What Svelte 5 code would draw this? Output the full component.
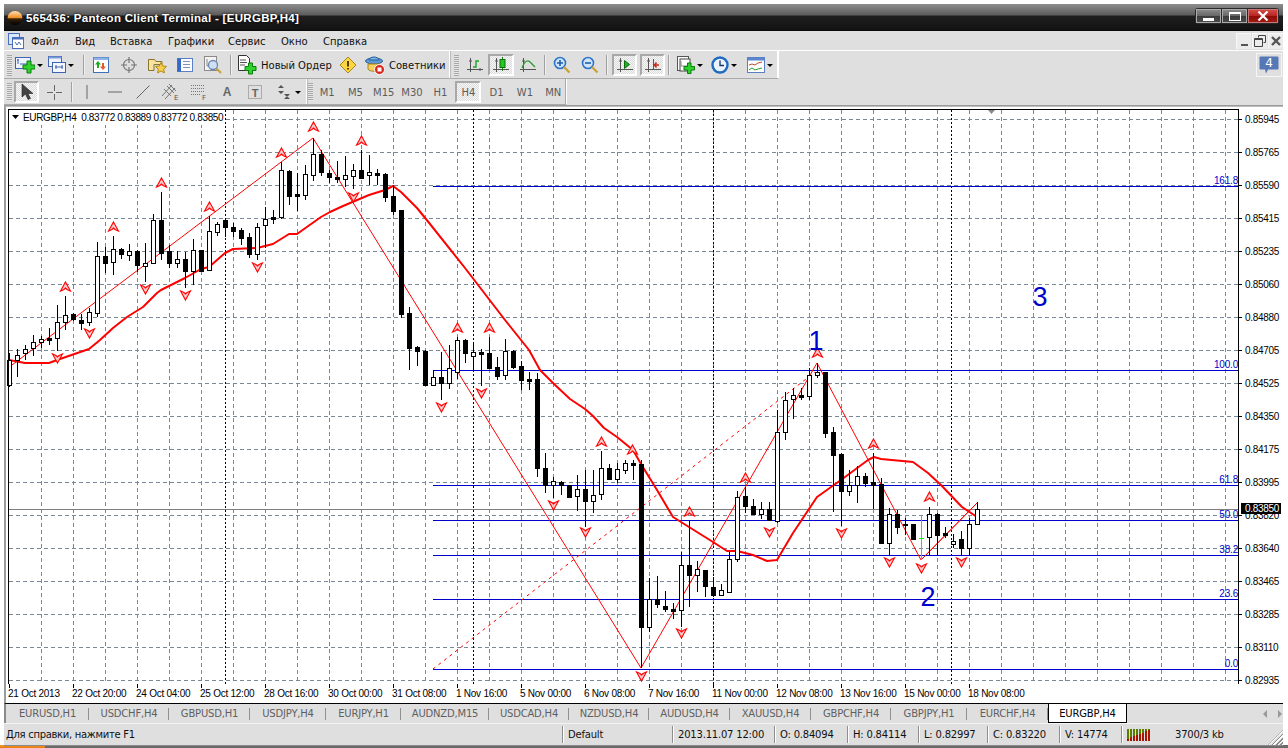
<script>
  const candles = [
    [353,360,385,387,1],[349,355,360,377,1],[345,349,353,360,1],[335,342,348,356,1],[336,339,342,348,1],[328,338,340,345,0],[305,322,338,351,1],[296,315,322,330,1],
    [313,314,319,321,0],[314,320,323,330,0],[308,312,322,326,1],[242,256,313,317,1],[247,256,263,273,0],[236,249,262,275,1],[248,249,254,259,0],[244,251,255,261,1],
    [250,251,265,272,0],[243,263,266,282,1],[214,220,263,263,1],[192,220,253,260,0],[245,251,263,268,0],[251,259,263,268,1],[252,259,271,288,0],[239,250,271,285,1],
    [250,250,271,272,0],[216,231,270,271,1],[222,224,232,236,1],[219,220,227,237,0],[223,227,231,237,0],[228,230,238,245,0],[233,237,254,258,0],[223,227,254,260,1],
    [207,219,225,248,1],[210,217,219,224,0],[162,170,217,219,1],[170,171,196,205,0],[173,194,196,211,0],[165,174,195,200,1],[138,154,175,181,1],[150,154,172,176,0],
    [170,173,177,183,0],[161,177,179,183,0],[156,175,179,187,1],[164,170,176,189,1],[150,170,178,178,0],[155,172,175,185,1],[169,173,175,185,0],[173,174,197,202,0],
    [185,196,211,215,0],[210,210,314,318,0],[307,313,348,370,0],[346,347,351,366,0],[350,351,385,386,0],[370,377,385,386,1],[352,377,383,400,0],[345,368,383,389,1],
    [337,340,372,379,1],[339,340,353,363,0],[342,352,356,372,1],[349,352,354,386,0],[337,353,368,368,0],[357,367,376,380,0],[339,351,375,380,1],[350,351,367,369,0],
    [361,366,380,390,0],[372,379,381,390,0],[373,379,468,477,0],[453,468,485,493,0],[477,481,485,498,1],[481,482,485,495,0],[485,485,497,497,0],[475,489,496,511,1],
    [470,489,501,527,0],[470,495,501,513,1],[451,468,494,500,1],[464,468,479,479,0],[463,469,479,483,1],[460,463,470,474,1],[460,463,465,480,0],[460,464,627,668,0],
    [578,599,627,632,1],[576,599,604,608,0],[591,606,609,612,0],[603,609,611,619,0],[552,565,610,627,1],[521,565,575,607,0],[561,569,575,592,1],[570,570,586,597,0],
    [577,587,595,597,0],[584,590,595,596,1],[552,559,592,592,1],[491,497,559,562,1],[487,496,506,513,0],[499,506,514,514,0],[502,509,514,519,1],[502,509,520,521,0],
    [410,432,521,523,1],[392,400,432,440,1],[388,395,399,419,1],[388,395,397,400,0],[368,375,396,400,1],[363,372,375,378,1],[372,372,433,438,0],[427,432,455,512,0],
    [453,454,491,526,0],[470,485,491,496,1],[466,476,485,503,1],[473,476,483,487,0],[453,482,485,509,0],[478,484,543,543,0],[508,514,543,555,1],[510,514,527,534,0],
    [518,524,525,535,0],[524,524,539,539,0],[515,538,538,560,2],[507,514,537,555,1],[513,514,535,555,0],[527,533,535,538,0],[534,541,544,548,1],[531,539,548,555,0],
    [518,524,548,555,1],[502,509,524,525,1]
  ];
  const barX = (i) => 9 + 8 * i;
  const prices = ['0.85945','0.85765','0.85590','0.85415','0.85235','0.85060','0.84880','0.84705','0.84525','0.84350','0.84175','0.83995','0.83820','0.83640','0.83465','0.83285','0.83110','0.82935'];
  const times = ['21 Oct 2013','22 Oct 20:00','24 Oct 04:00','25 Oct 12:00','28 Oct 16:00','30 Oct 00:00','31 Oct 08:00','1 Nov 16:00','5 Nov 00:00','6 Nov 08:00','7 Nov 16:00','11 Nov 00:00','12 Nov 08:00','13 Nov 16:00','15 Nov 00:00','18 Nov 08:00'];
  const vgrid = Array.from({ length: 38 }, (_, k) => 41 + 32 * k);
  const fibs = [['161.8',186],['100.0',370],['61.8',485],['50.0',520],['38.2',555],['23.6',599],['0.0',669]];
  const ma = '9,360 25,363 49,363 57,360 89,349 100,340 113,328 127,317 143,307 157,293 161,290 185,278 201,269 209,267 225,253 233,249 257,248 273,244 289,234 297,234 321,217 330,212 343,206 369,195 385,190 393,186 401,192 417,208 430,224 465,268 505,320 529,350 540,370 553,383 570,399 585,409 593,416 604,428 617,437 633,450 641,464 657,490 673,517 689,527 713,542 727,551 737,551 753,555 767,561 777,560 793,533 817,497 841,480 868,460 874,457 881,459 913,462 928,473 941,485 962,507 977,517';
  const ups = [[65,287],[113,227],[161,183],[209,207],[281,153],[313,127],[361,141],[457,328],[489,328],[601,442],[632,450],[689,512],[745,478],[817,353],[873,444],[929,497]];
  const downs = [[57,358],[89,333],[145,289],[185,295],[257,267],[353,197],[441,407],[481,393],[553,505],[585,532],[641,676],[681,633],[769,532],[841,533],[889,562],[921,568],[961,562]];
  const arrow = 'M0 -5L5 4L1.5 2.5L0 1L-1.500 2.5L-5 4Z';
  const tabs = [['EURUSD,H1',83],['USDCHF,H4',80],['GBPUSD,H1',81],['USDJPY,H4',76],['EURJPY,H1',75],['AUDNZD,M15',88],['USDCAD,H4',80],['NZDUSD,H4',80],['AUDUSD,H4',81],['XAUUSD,H4',81],['GBPCHF,H4',80],['GBPJPY,H1',76],['EURCHF,H4',81]];
  const meters = [0,1,2,3,4,5,6,7];
</script>

<div class="window">
  <header class="title">
    <svg class="orb" viewBox="0 0 16 16" width="16" height="16"><defs><linearGradient id="orbg" x1="0" y1="0" x2="0" y2="1"><stop offset="0" stop-color="#ffe0b0"/><stop offset=".5" stop-color="#f08a20"/><stop offset=".55" stop-color="#3a2208"/><stop offset="1" stop-color="#000"/></linearGradient></defs><ellipse cx="8" cy="8" rx="7.5" ry="7" fill="url(#orbg)"/></svg>
    <span class="title-text">565436: Panteon Client Terminal - [EURGBP,H4]</span>
    <div class="winbtns">
      <div class="wb"><i class="bar-min"></i></div>
      <div class="wb"><i class="box-max"></i></div>
      <div class="wb close"><svg viewBox="0 0 12 10" width="12" height="10"><path d="M1.5 .5L10.5 9.5M10.5 .5L1.5 9.5" stroke="#fff" stroke-width="2.2"/></svg></div>
    </div>
  </header>

  <nav class="menu">
    <svg class="menu-icon" viewBox="0 0 16 16" width="16" height="16"><rect x=".5" y=".5" width="11" height="11" fill="#dbe6fa" stroke="#4a6fbe"/><rect x="4.5" y="4.5" width="11" height="11" fill="#fff" stroke="#4a6fbe"/><rect x="4.5" y="4.5" width="11" height="2" fill="#4a6fbe"/><path d="M7 9l2 3 2-3 2 3" stroke="#4a6fbe" fill="none"/></svg>
    <span class="mi m1">Файл</span><span class="mi m2">Вид</span><span class="mi m3">Вставка</span><span class="mi m4">Графики</span><span class="mi m5">Сервис</span><span class="mi m6">Окно</span><span class="mi m7">Справка</span>
    <div class="mdi">
      <div class="mb"><i class="mdi-min"></i></div>
      <div class="mb"><svg viewBox="0 0 14 14" width="14" height="14"><path d="M5.5 1.5h7v7h-2M1.5 4.5h8v8h-8zM1.5 5.5h8M5.5 1.5v2" fill="none" stroke="#444"/></svg></div>
      <div class="mb"><svg viewBox="0 0 12 12" width="12" height="12"><path d="M2 2L10 10M10 2L2 10" stroke="#555" stroke-width="2.4"/></svg></div>
    </div>
  </nav>

  <div class="toolrow r1">
    <div class="tools t1">
      <i class="grip"></i>
      <div class="btn w30"><svg viewBox="0 0 20 18" width="20" height="18"><rect x=".5" y="1.5" width="15" height="11" fill="#eef3fd" stroke="#3e63b0"/><path d="M3 3v5M2 4h2M5 8h8" stroke="#3e63b0" fill="none"/><path d="M8 9h4V5h4v4h4v4h-4v4h-4v-4H8z" fill="#2fd12f" stroke="#0a7d0a"/></svg><b class="caret"></b></div>
      <div class="btn w33"><svg viewBox="0 0 18 18" width="18" height="18"><rect x=".5" y=".5" width="13" height="10" fill="#eef3fd" stroke="#3e63b0"/><rect x=".5" y=".5" width="13" height="2" fill="#7e9cdc"/><rect x="4.5" y="6.5" width="13" height="10" fill="#f4f7fe" stroke="#3e63b0"/><path d="M7 11h8M8 9v4M14 9v4" stroke="#3e63b0"/></svg><b class="caret"></b></div>
      <i class="sep sa"></i>
      <div class="btn w28"><svg viewBox="0 0 16 16" width="16" height="16"><rect x=".5" y=".5" width="15" height="15" fill="#fff" stroke="#3e70b8"/><rect x=".5" y=".5" width="15" height="2.5" fill="#8fb3e8"/><path d="M5 4L2 7.5h2V11h2V7.5h2z" fill="#22a822"/><path d="M10 13l3-3.5h-2V6H9v3.5H7z" fill="#e2582a"/></svg></div>
      <div class="btn w28"><svg viewBox="0 0 18 18" width="18" height="18"><circle cx="9" cy="9" r="5.5" fill="none" stroke="#777" stroke-width="1.2"/><path d="M9 1v6M9 11v6M1 9h6M11 9h6" stroke="#777" stroke-width="1.2"/></svg></div>
      <div class="btn w28"><svg viewBox="0 0 19 18" width="19" height="18"><path d="M.5 3.5h6l1.500 2h6v3h-8v6h-5.500z" fill="#f8e39a" stroke="#8a7430"/><path d="M13 6.500l1.700 3.500 3.800.5-2.800 2.600.7 3.800-3.400-1.900-3.400 1.900.7-3.800-2.800-2.600 3.800-.5z" fill="#f7cf4b" stroke="#b08a14"/></svg></div>
      <div class="btn w28"><svg viewBox="0 0 16 16" width="16" height="16"><rect x=".5" y="1.500" width="15" height="13" fill="#fff" stroke="#5a7fc4"/><rect x=".5" y="1.500" width="3.500" height="13" fill="#3469c9"/><path d="M6 4.500h7M6 7.500h7M6 10.500h7" stroke="#7d93bb"/></svg></div>
      <div class="btn w28"><svg viewBox="0 0 18 18" width="18" height="18"><rect x=".5" y=".5" width="12" height="14" fill="#f4f4f4" stroke="#8a8a8a"/><path d="M3 3v7h7" stroke="#888" fill="none"/><circle cx="9" cy="9" r="4.500" fill="#cfe0f6" stroke="#6a86ad" stroke-width="1.300"/><path d="M12.500 12.500l4.500 4.500" stroke="#c9a33c" stroke-width="2.200"/></svg></div>
      <i class="sep sb"></i>
      <div class="btn wo"><svg viewBox="0 0 20 20" width="20" height="20"><path d="M1.500 .5h8l3 3v12h-11z" fill="#fff" stroke="#333"/><path d="M3 5h6M3 7.500h7M3 10h5" stroke="#555"/><path d="M8 11.500h3.500V8h4v3.500H19v4h-3.500V19h-4v-3.500H8z" fill="#2fd12f" stroke="#0a7d0a"/></svg><span class="btxt">Новый Ордер</span></div>
      <div class="btn w26"><svg viewBox="0 0 18 18" width="18" height="18"><path d="M9 1l8 8-8 8-8-8z" fill="#fbd640" stroke="#a8881c"/><path d="M9 5v5.500M9 12v1.500" stroke="#5a3d08" stroke-width="2"/></svg></div>
      <div class="btn wa"><svg viewBox="0 0 20 20" width="20" height="20"><ellipse cx="9" cy="6" rx="8.500" ry="3" fill="#5b9ad8" stroke="#2a5e98"/><path d="M4 5c1-4 9-4 10 0z" fill="#7ab4e4" stroke="#2a5e98"/><path d="M3 9h12v5c-1 3-11 3-12 0z" fill="#f7cf5c" stroke="#a8881c"/><circle cx="14.500" cy="14.500" r="5" fill="#d4281c" stroke="#fff"/><rect x="12.500" y="12.500" width="4" height="4" fill="#fff"/></svg><span class="btxt">Советники</span></div>
    </div>
    <div class="tools t2">
      <i class="grip"></i>
      <div class="btn w27"><svg viewBox="0 0 18 18" width="18" height="18"><path d="M4.500 2v14M1 13.500h16M3 5h3M14 15v-3" stroke="#555" fill="none"/><path d="M7 11h3V5h3" stroke="#1fa41f" stroke-width="1.400" fill="none"/></svg></div>
      <div class="btn w26 on"><svg viewBox="0 0 18 18" width="18" height="18"><path d="M4.500 2v14M1 13.500h16M3 5h3" stroke="#555" fill="none"/><path d="M10.500 1v14" stroke="#1a7a1a"/><rect x="8" y="3.500" width="5" height="8" fill="#23c823" stroke="#0d6e0d"/></svg></div>
      <div class="btn w28"><svg viewBox="0 0 18 18" width="18" height="18"><path d="M4.500 2v14M1 13.500h16M3 5h3" stroke="#555" fill="none"/><path d="M3 12c3-8 6-8 8-6s3 3 5 5" stroke="#2b9b2b" stroke-width="1.300" fill="none"/></svg></div>
      <i class="sep"></i>
      <div class="btn w28"><svg viewBox="0 0 18 18" width="18" height="18"><circle cx="7" cy="7" r="5.500" fill="#cfe4fb" stroke="#2c74c8" stroke-width="1.600"/><path d="M4 7h6M7 4v6" stroke="#1f5fae" stroke-width="1.600"/><path d="M11 11l5.500 5.500" stroke="#c9a33c" stroke-width="2.400"/></svg></div>
      <div class="btn w28"><svg viewBox="0 0 18 18" width="18" height="18"><circle cx="7" cy="7" r="5.500" fill="#cfe4fb" stroke="#2c74c8" stroke-width="1.600"/><path d="M4 7h6" stroke="#1f5fae" stroke-width="1.600"/><path d="M11 11l5.500 5.500" stroke="#c9a33c" stroke-width="2.400"/></svg></div>
      <i class="sep sc"></i>
      <div class="btn w25 on"><svg viewBox="0 0 18 18" width="18" height="18"><path d="M4.500 2v14M1 13.500h16M3 5h3" stroke="#555" fill="none"/><path d="M8.500 4.500l5 4-5 4z" fill="#1fb01f" stroke="#0d6e0d"/></svg></div>
      <div class="btn w25 on gap3"><svg viewBox="0 0 18 18" width="18" height="18"><path d="M4.500 2v14M1 13.500h16M3 5h3M9.500 3v11" stroke="#555" fill="none"/><path d="M15 9H11M12.500 6.500L10.500 9l2 2.500" stroke="#c82a1a" stroke-width="1.600" fill="none"/></svg></div>
      <i class="sep sd"></i>
      <div class="btn w35"><svg viewBox="0 0 18 18" width="18" height="18"><rect x=".5" y=".5" width="11" height="14" fill="#fff" stroke="#555"/><rect x="3" y="3" width="10" height="12" fill="#fff" stroke="#444"/><path d="M4 5v5h6" stroke="#888" fill="none"/><path d="M7 10.500h3.500V7h3.500v3.500H17.500v3.500H14V17.500h-3.500V14H7z" fill="#2fd12f" stroke="#0a7d0a"/></svg><b class="caret"></b></div>
      <div class="btn w34"><svg viewBox="0 0 18 18" width="18" height="18"><circle cx="9" cy="9" r="7.500" fill="#eaf4ff" stroke="#1f6ac0" stroke-width="2.400"/><path d="M9 4.500V9.500h4" stroke="#16345a" stroke-width="1.300" fill="none"/></svg><b class="caret"></b></div>
      <div class="btn w35 gap1"><svg viewBox="0 0 18 16" width="18" height="16"><rect x=".5" y=".5" width="17" height="15" fill="#fff" stroke="#5a7fc4"/><rect x=".5" y=".5" width="17" height="3" fill="#5a86d0"/><path d="M2 8l3-1 3 1 3-2 4-1" stroke="#c84a2a" fill="none"/><path d="M2 13l3-2 3 2 3-1 4-1" stroke="#2b9b2b" fill="none"/></svg><b class="caret"></b></div>
    </div>
    <div class="notify"><svg viewBox="0 0 20 18" width="20" height="18"><path d="M1.500 .5h17a1 1 0 0 1 1 1v11a1 1 0 0 1-1 1H9l-2 4-1-4H1.500a1 1 0 0 1-1-1v-11a1 1 0 0 1 1-1z" fill="#5678b6"/><text x="10" y="11" class="notify-n">4</text></svg></div>
  </div>

  <div class="toolrow r2">
    <div class="tools t3">
      <i class="grip g2"></i>
      <div class="btn w25 on"><svg viewBox="0 0 14 18" width="14" height="18"><path d="M2 1v13l3.500-3 2.500 5.500 2.500-1L8 10.500h5z" fill="#444" stroke="#222" stroke-width=".6"/></svg></div>
      <div class="btn w30"><svg viewBox="0 0 17 17" width="17" height="17"><path d="M8.500 1v6M8.500 10v6M1 8.500h6M10 8.500h6" stroke="#666"/></svg></div>
      <i class="sep s2"></i>
      <div class="btn w28"><svg viewBox="0 0 6 14" width="6" height="14"><path d="M3 0v14" stroke="#666"/></svg></div>
      <div class="btn w28"><svg viewBox="0 0 14 6" width="14" height="6"><path d="M0 3h14" stroke="#666"/></svg></div>
      <div class="btn w28"><svg viewBox="0 0 14 14" width="14" height="14"><path d="M.5 13.500l13-13" stroke="#666"/></svg></div>
      <div class="btn w28"><svg viewBox="0 0 20 18" width="20" height="18"><path d="M1 13L11 2M4 16L14 5M6 3l7 7M3 6l7 7M8 1l7 7" stroke="#777" fill="none"/><text x="13" y="17" class="lil">E</text></svg></div>
      <div class="btn w28"><svg viewBox="0 0 18 18" width="18" height="18"><path d="M1 2.500h14M1 5.500h14M1 8.500h14M1 11.500h10" stroke="#777" stroke-dasharray="1 1"/><text x="12" y="17" class="lil">F</text></svg></div>
      <div class="btn w28"><span class="bigA">A</span></div>
      <div class="btn w28"><svg viewBox="0 0 16 16" width="16" height="16"><rect x="1.500" y="1.500" width="13" height="13" fill="none" stroke="#777" stroke-dasharray="1 1"/><text x="8" y="12.500" class="bigT">T</text></svg></div>
      <div class="btn w38"><svg viewBox="0 0 18 16" width="18" height="16"><path d="M3 4l3-3 3 3zM3 7h6L6 10zM9 10l3 3 3-3zM9 15l3-3 3 3z" fill="#555"/></svg><b class="caret"></b></div>
    </div>
    <div class="tools t4">
      <i class="grip g2 flush"></i>
      <div class="tf">M1</div><div class="tf">M5</div><div class="tf">M15</div><div class="tf">M30</div><div class="tf">H1</div><div class="tf on">H4</div><div class="tf">D1</div><div class="tf">W1</div><div class="tf">MN</div>
    </div>
  </div>

  <section class="chart">
    <svg class="plot" viewBox="4 106 1279 578" width="1279" height="578">
      <g shape-rendering="crispEdges">
        {#each prices as _, k}
          <line x1="9" x2="1238" y1={119.5 + 33 * k} y2={119.5 + 33 * k} class="grid"/>
        {/each}
        {#each vgrid as x}
          <line x1={x + .5} x2={x + .5} y1="110" y2="684" class="grid"/>
        {/each}
        {#each [225, 473, 713, 951] as x}
          <line x1={x + .5} x2={x + .5} y1="110" y2="684" class="period"/>
        {/each}
        <line x1="8" x2="1238" y1="509.5" y2="509.5" class="bid"/>
        <rect x="9" y="110" width="216" height="15" fill="#fff"/>
      </g>
      <path d="M988 110h7l-3.500 4z" fill="#8a8a8a"/>
      <path d="M12 115h7l-3.500 4z" fill="#000"/>
      <text x="23" y="121" class="legend">EURGBP,H4  0.83772 0.83889 0.83772 0.83850</text>

      <g class="fib" shape-rendering="crispEdges">
        {#each fibs as f}
          <line x1="433" x2="1238" y1={f[1] + .5} y2={f[1] + .5}/>
        {/each}
      </g>
      {#each fibs as f}
        <text x="1238" y={f[1] - 2} class="fibt">{f[0]}</text>
      {/each}

      <polyline class="zig" points="12,365 313,138 641,668 817,363 921,560 977,503"/>
      <line class="zigd" x1="433" y1="669" x2="815" y2="372"/>
      <polyline class="ma" points={ma}/>
      <path d="M921 560L977 503" stroke="#f00" fill="none"/>

      {#each ups as p}
        <path d={arrow} transform="translate({p[0] + .5} {p[1]})" class="mark"/>
      {/each}
      {#each downs as p}
        <path d={arrow} transform="translate({p[0] + .5} {p[1]}) scale(1 -1)" class="mark"/>
      {/each}

      <g shape-rendering="crispEdges">
        {#each candles as c, i}
          {#if c[4] === 2}
            <line x1={barX(i) + .5} x2={barX(i) + .5} y1={c[0]} y2={c[3]} stroke="#00ff00"/>
            <line x1={barX(i) - 2} x2={barX(i) + 3} y1={c[1] + .5} y2={c[1] + .5} stroke="#00ff00"/>
          {:else}
            <line x1={barX(i) + .5} x2={barX(i) + .5} y1={c[0]} y2={c[3]} stroke="#000"/>
            <rect x={barX(i) - 1.5} y={c[1] + .5} width="4" height={c[2] - c[1]} fill={c[4] ? '#fff' : '#000'} stroke="#000"/>
          {/if}
        {/each}
      </g>

      <text x="816" y="350" class="wave">1</text>
      <text x="928" y="606" class="wave">2</text>
      <text x="1040" y="306" class="wave">3</text>

      <g shape-rendering="crispEdges">
        <line x1="8.500" x2="8.500" y1="109" y2="684" stroke="#000"/>
        <line x1="1238.500" x2="1238.500" y1="109" y2="684" stroke="#000"/>
        <line x1="8" x2="1239" y1="109.500" y2="109.500" stroke="#000"/>
        {#each prices as _, k}
          <line x1="1239" x2="1242" y1={119.5 + 33 * k} y2={119.5 + 33 * k} stroke="#000"/>
        {/each}
      </g>
      {#each prices as p, k}
        <text x="1245" y={122.5 + 33 * k} class="axt">{p}</text>
      {/each}
      <rect x="1241" y="503" width="40" height="11" fill="#000"/>
      <text x="1245" y="512" class="axt inv">0.83850</text>
    </svg>
    <div class="xaxis">
      {#each times as t}
        <span class="tick">{t}</span>
      {/each}
    </div>
  </section>

  <div class="tabs">
    {#each tabs as t}
      <span class="tab" style="width:{t[1]}px">{t[0]}</span>
    {/each}
    <span class="tab active">EURGBP,H4</span>
    <div class="tab-arrows"><i class="la"></i><i class="ra"></i></div>
  </div>

  <footer class="status">
    <span class="st s-help">Для справки, нажмите F1</span>
    <span class="st s-prof">Default</span>
    <span class="st s-date">2013.11.07 12:00</span>
    <span class="st s-o">O: 0.84094</span>
    <span class="st s-h">H: 0.84114</span>
    <span class="st s-l">L: 0.82997</span>
    <span class="st s-c">C: 0.83220</span>
    <span class="st s-v">V: 14774</span>
    <span class="st s-m">
      <span class="meter">
        {#each meters as m}
          <i class="mbar"><b style="height:{2 + m * 1.2}px"></b></i>
        {/each}
      </span>
    </span>
    <span class="st s-kb">3700/3 kb</span>
    <i class="sizegrip"></i>
  </footer>
</div>
<div class="taskbar"><i class="orange"></i></div>

<style>
  :global(html), :global(body) { margin: 0; background: #fff; overflow: hidden; }
  .window { margin: 4px 5px 0 4px; height: 741px; display: flex; flex-direction: column; font-family: "DejaVu Sans", sans-serif; font-size: 10px; color: #000; background: #dfdfdf; }
  i, b { display: block; }

  .title { height: 27px; flex: none; display: flex; align-items: center; background: linear-gradient(#8e8e8e 0, #5c5c5c 11px, #1f1f1f 12px, #121212 26px, #000 27px); padding-left: 3px; }
  .orb { margin-top: 1px; }
  .title-text { margin-left: 3px; color: #fff; font-family: "Liberation Sans", sans-serif; font-weight: 700; font-size: 11.5px; letter-spacing: .3px; text-shadow: 0 0 3px #000; white-space: nowrap; }
  .winbtns { margin-left: auto; margin-right: 4px; display: flex; gap: 1px; padding: 1px; background: #2a2a2a; border-radius: 3px; margin-top: -3px; }
  .wb { width: 25px; height: 14px; display: flex; align-items: center; justify-content: center; background: linear-gradient(#888 0, #666 50%, #3c3c3c 51%, #4a4a4a); border: 1px solid #aaa; box-sizing: border-box; }
  .wb.close { width: 30px; background: linear-gradient(#d14a44 0, #b52420 50%, #8c0c08 51%, #a01a12); border-color: #c77; }
  .bar-min { width: 11px; height: 3px; background: #fff; margin-top: 6px; }
  .box-max { width: 10px; height: 6px; border: 1px solid #fff; border-top-width: 2px; box-sizing: content-box; }

  .menu { height: 19px; flex: none; display: flex; align-items: center; border-bottom: 1px solid #fff; background: #dfdfdf; position: relative; box-sizing: content-box; }
  .menu-icon { margin-left: 4px; flex: none; }
  .mi { flex: none; color: #111; font-size: 10px; padding-top: 1px; }
  .m1 { margin-left: 7px; width: 44px; }
  .m2 { width: 35px; }
  .m3 { width: 58px; }
  .m4 { width: 60px; }
  .m5 { width: 53px; }
  .m6 { width: 42px; }
  .m7 { width: 60px; }
  .mdi { margin-left: auto; display: flex; gap: 1px; }
  .mb { width: 15px; height: 16px; display: flex; align-items: center; justify-content: center; background: #ececec; border-left: 1px solid #f8f8f8; border-top: 1px solid #f8f8f8; box-sizing: border-box; }
  .mdi-min { width: 7px; height: 2px; background: #555; margin-top: 7px; }

  .toolrow { flex: none; display: flex; align-items: stretch; background: #dfdfdf; }
  .r1 { height: 28px; }
  .r2 { height: 27px; border-bottom: 1px solid #9a9a9a; box-sizing: border-box; }
  .tools { display: flex; align-items: center; border-right: 1px solid #bbb; border-bottom: 1px solid #aaa; box-shadow: inset -1px 0 #fff; box-sizing: border-box; padding-top: 1px; }
  .t1 { width: 447px; padding-left: 3px; }
  .t2 { width: 328px; padding-left: 3px; border-right: 1px solid #fff; }
  .t3 { width: 304px; padding-left: 3px; }
  .t4 { width: 259px; border-right: 1px solid #fff; box-shadow: inset -1px 0 #aaa; }
  .grip { width: 5px; height: 21px; flex: none; margin-right: 2px; background: repeating-linear-gradient(#a8a8a8 0 1px, #e6e6e6 1px 2px); }
  .g2 { height: 18px; }
  .flush { margin-right: 0; }
  .sep { width: 1px; height: 20px; background: #a0a0a0; border-right: 1px solid #f0f0f0; margin: 0 2px; flex: none; }
  .sa { margin: 0 2px 0 6px; }
  .sb { margin: 0 2px 0 3px; }
  .sc { margin: 0 4px 0 2px; }
  .sd { margin: 0 2px 0 3px; }
  .s2 { margin: 0 0 0 2px; }
  .gap3 { margin-left: 3px; }
  .gap1 { margin-left: 1px; }
  .btn { height: 22px; flex: none; display: flex; align-items: center; justify-content: center; box-sizing: border-box; }
  .w25 { width: 25px; }
  .w26 { width: 26px; }
  .w27 { width: 27px; }
  .w28 { width: 28px; }
  .w30 { width: 30px; }
  .w33 { width: 33px; }
  .w34 { width: 34px; }
  .w35 { width: 35px; }
  .w38 { width: 38px; }
  .wo { width: 101px; justify-content: flex-start; padding-left: 3px; }
  .wa { width: 88px; justify-content: flex-start; padding-left: 4px; }
  .btxt { margin-left: 4px; white-space: nowrap; color: #111; }
  .caret { width: 0; height: 0; margin-left: 2px; border: 3px solid transparent; border-top: 3px solid #000; border-bottom: 0; }
  .on { background: repeating-conic-gradient(#f6f6f6 0 25%, #dcdcdc 0 50%) 0 0 / 2px 2px; border: 2px solid; border-color: #a8a8a8 #fff #fff #a8a8a8; }
  .notify { margin-left: auto; width: 26px; height: 24px; margin-top: 2px; display: flex; align-items: center; justify-content: center; border: 1px solid #f6f6f6; box-sizing: border-box; margin-right: 1px; }
  .notify-n { fill: #fff; font: 12px "DejaVu Sans", sans-serif; text-anchor: middle; }
  .lil { font: 7px "DejaVu Sans", sans-serif; fill: #555; }
  .bigA { font: 700 12px "Liberation Sans", sans-serif; color: #666; }
  .bigT { font: 700 11px "Liberation Sans", sans-serif; fill: #666; text-anchor: middle; }
  .tf { width: 28.3px; height: 22px; flex: none; display: flex; align-items: center; justify-content: center; color: #5c5c5c; font-size: 10px; box-sizing: border-box; }
  .tf.on { width: 26px; margin: 0 1px; background: repeating-conic-gradient(#f6f6f6 0 25%, #dcdcdc 0 50%) 0 0 / 2px 2px; border: 2px solid; border-color: #a8a8a8 #fff #fff #a8a8a8; }

  .chart { flex: none; height: 597px; background: #fff; border-left: 2px solid #9c9c9c; border-top: 1px solid #bdbdbd; box-sizing: border-box; position: relative; display: flex; flex-direction: column; }
  .plot { display: block; flex: none; margin: -1px 0 0 -2px; overflow: visible; }
  .grid { stroke: #778899; stroke-dasharray: 4 3; }
  .period { stroke: #000; stroke-dasharray: 2 2; }
  .bid { stroke: #808080; }
  .legend { font: 10px "Liberation Sans", sans-serif; white-space: pre; letter-spacing: -.35px; }
  .fib line { stroke: #0000cc; }
  .fibt { fill: #0000cc; font: 10px "Liberation Sans", sans-serif; text-anchor: end; letter-spacing: -.2px; }
  .zig { fill: none; stroke: #f00; stroke-width: 1; }
  .zigd { stroke: #f00; stroke-width: 1; stroke-dasharray: 3 4; }
  .ma { fill: none; stroke: #f00; stroke-width: 2; stroke-linejoin: round; }
  .mark { fill: #ffc4c4; stroke: #f00; stroke-width: 1.1; stroke-linejoin: miter; }
  .wave { fill: #0000cc; font: 27px "Liberation Sans", sans-serif; text-anchor: middle; }
  .axt { font: 10px "Liberation Sans", sans-serif; letter-spacing: -.3px; fill: #000; }
  .inv { fill: #fff; }
  .xaxis { display: flex; padding-left: 2px; height: 19px; align-items: center; }
  .tick { width: 64px; flex: none; font: 10px "Liberation Sans", sans-serif; letter-spacing: -.25px; white-space: nowrap; position: relative; }
  .tick::before { content: ""; position: absolute; left: 1px; top: -4px; width: 1px; height: 4px; background: #000; }

  .tabs { height: 19px; flex: none; display: flex; align-items: stretch; border-top: 1px solid #000; border-left: 2px solid #8a8a8a; border-bottom: 1px solid #f4f4f4; background: #dfdfdf; box-sizing: content-box; margin-bottom: -1px; position: relative; }
  .tab { flex: none; display: flex; align-items: center; justify-content: center; color: #5f5f5f; font-size: 10px; letter-spacing: -.2px; background: linear-gradient(#909090, #909090) right 4px / 1px 12px no-repeat; }
  .tab.active { width: 79px; color: #000; background: #fff; border: 1px solid #000; border-top: 0; margin: 0 0 -1px 0; height: 19px; box-sizing: border-box; }
  .tab-arrows { margin-left: auto; display: flex; gap: 11px; align-items: center; margin-right: 1px; }
  .la, .ra { width: 0; height: 0; border: 4px solid transparent; }
  .la { border-right: 4px solid #999; border-left: 0; }
  .ra { border-left: 4px solid #999; border-right: 0; }

  .status { height: 23px; flex: none; display: flex; align-items: center; background: #dfdfdf; position: relative; box-sizing: border-box; border-bottom: 1px solid #8a8a8a; border-top: 1px solid #f4f4f4; }
  .st { flex: none; height: 17px; display: flex; align-items: center; white-space: nowrap; font-size: 10px; letter-spacing: -.2px; box-sizing: border-box; color: #111; }
  .st + .st { border-left: 1px solid #8e8e8e; box-shadow: inset 1px 0 #fff; padding-left: 5px; }
  .s-help { width: 558px; padding-left: 2px; letter-spacing: -.3px; }
  .s-prof { width: 110px; }
  .s-date { width: 102px; }
  .s-o { width: 73px; }
  .s-h { width: 71px; }
  .s-l { width: 69px; }
  .s-c { width: 72px; }
  .s-v { width: 62px; }
  .s-m { width: 54px; }
  .s-kb { width: 60px; border-left: 0 !important; box-shadow: none !important; padding-left: 0 !important; }
  .meter { display: flex; gap: 1px; height: 12px; align-items: stretch; }
  .mbar { width: 2px; background: #5a7d00; display: flex; flex-direction: column; justify-content: flex-end; }
  .mbar b { background: #a81400; }
  .sizegrip { position: absolute; right: 0; bottom: 0; width: 15px; height: 15px; background: repeating-linear-gradient(135deg, transparent 0 1px, #8a8a8a 1px 2px, #fff 2px 3px); clip-path: polygon(100% 0, 100% 100%, 0 100%); }

  .taskbar { height: 3px; background: #6a6a6a; }
  .orange { width: 45px; height: 3px; background: linear-gradient(#f49a28, #e87810); }
</style>
